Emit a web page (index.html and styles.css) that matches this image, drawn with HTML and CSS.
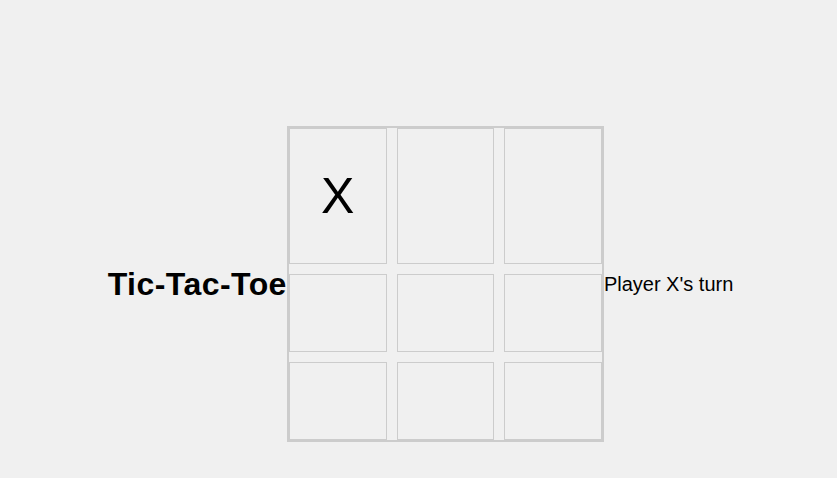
FILE: index.html
```html
<!DOCTYPE html>
<html lang="en">
<head>
<meta charset="utf-8">
<title>Tic-Tac-Toe</title>
<link rel="stylesheet" href="styles.css">
</head>
<body>
<main class="game">
  <h1 class="title">Tic-Tac-Toe</h1>
  <div class="board">
    <div class="cell">X</div>
    <div class="cell"></div>
    <div class="cell"></div>
    <div class="cell"></div>
    <div class="cell"></div>
    <div class="cell"></div>
    <div class="cell"></div>
    <div class="cell"></div>
    <div class="cell"></div>
  </div>
  <p class="status">Player X's turn</p>
</main>
</body>
</html>
```

FILE: styles.css
```css
html, body {
  margin: 0;
  padding: 0;
  background: #f0f0f0;
}

body {
  font-family: "Liberation Sans", Arial, sans-serif;
  color: #000;
}

.game {
  display: flex;
  flex-direction: row;
  justify-content: center;
  align-items: center;
  padding: 126px 0 0 4px;
}

.title {
  font-size: 32px;
  font-weight: bold;
  letter-spacing: 0.45px;
  margin: 21px 0;
}

.board {
  box-sizing: border-box;
  width: 317px;
  height: 316px;
  border: 2px solid #ccc;
  display: grid;
  grid-template-columns: repeat(3, 1fr);
  grid-template-rows: auto auto auto;
  gap: 10px;
}

.cell {
  border: 1px solid #ccc;
  display: flex;
  align-items: center;
  justify-content: center;
  font-size: 50px;
}

.status {
  font-size: 20px;
  margin: 0;
  color: #000;
}
```
